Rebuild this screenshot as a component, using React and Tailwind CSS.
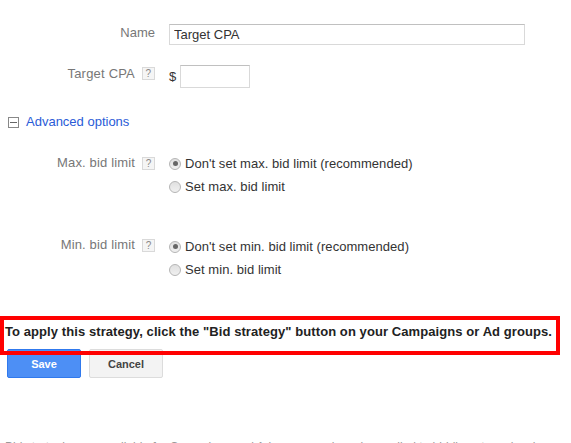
const HelpIcon = () => (
  <span className="flex h-[13px] w-[13px] items-center justify-center border border-[#d9d9d9] bg-[#f5f5f5] text-[10px] leading-none text-[#888]">
    ?
  </span>
);

const Radio = ({ checked, label }) => (
  <div className="flex h-[23px] items-center">
    <span className="flex h-[12px] w-[12px] items-center justify-center rounded-full border border-[#b5b5b5] bg-gradient-to-b from-[#e0e0e0] to-[#f0f0f0]">
      {checked && <span className="h-[5px] w-[5px] rounded-full bg-[#666]" />}
    </span>
    <span className="ml-[4px] tracking-[0.05px] text-[#333]">{label}</span>
  </div>
);

const BidLimit = ({ label, first, second, className, radiosClassName }) => (
  <div className={`flex ${className}`}>
    <div className="flex w-[155px] justify-end gap-[7px] pt-px tracking-[0.15px] text-[#777]">
      <span>{label}</span>
      <span className="mt-[2px]">
        <HelpIcon />
      </span>
    </div>
    <div className={`ml-[14px] flex flex-col ${radiosClassName}`}>
      <Radio checked label={first} />
      <Radio label={second} />
    </div>
  </div>
);

export default function App() {
  return (
    <div className="relative h-[443px] w-[571px] overflow-hidden bg-white font-['Liberation_Sans',Arial,sans-serif] text-[13px] leading-[16px]">
      <div className="pt-[24px]">
        {/* Name */}
        <div className="flex">
          <div className="w-[155px] pt-px text-right text-[#777]">Name</div>
          <input
            readOnly
            value="Target CPA"
            className="ml-[14px] h-[21px] w-[356px] border border-[#d9d9d9] border-t-[#c0c0c0] px-[4px] text-[#333] outline-none"
          />
        </div>

        {/* Target CPA */}
        <div className="mt-[20px] flex">
          <div className="flex w-[155px] justify-end gap-[7px] pt-px tracking-[0.2px] text-[#777]">
            <span>Target CPA</span>
            <span className="mt-[1px]">
              <HelpIcon />
            </span>
          </div>
          <div className="ml-[14px] flex items-center">
            <span className="w-[11px] text-[#333]">$</span>
            <input
              readOnly
              className="h-[23px] w-[70px] border border-[#d9d9d9] border-t-[#c0c0c0] outline-none"
            />
          </div>
        </div>

        {/* Advanced options */}
        <div className="mt-[26px] flex items-center pl-[8px]">
          <span className="flex h-[11px] w-[11px] items-center justify-center border border-[#888]">
            <span className="h-px w-[7px] bg-[#666]" />
          </span>
          <span className="ml-[7px] text-[#2a5bd7]">Advanced options</span>
        </div>

        <BidLimit
          className="mt-[24px]"
          radiosClassName="-mt-[2px]"
          label="Max. bid limit"
          first="Don't set max. bid limit (recommended)"
          second="Set max. bid limit"
        />
        <BidLimit
          className="mt-[38px]"
          radiosClassName="-mt-[1px]"
          label="Min. bid limit"
          first="Don't set min. bid limit (recommended)"
          second="Set min. bid limit"
        />

        {/* Strategy notice, its frame lies over the top of the buttons */}
        <div className="relative z-10 mt-[35px] flex h-[39px] w-[560px] items-center border-[4px] border-[#ff0000] pb-[7px] pl-[1px] text-[13px] font-bold tracking-[0.08px] whitespace-nowrap text-[#222]">
          To apply this strategy, click the "Bid strategy" button on your Campaigns or Ad groups.
        </div>

        {/* Actions */}
        <div className="-mt-[6px] flex gap-[8px] pl-[7px]">
          <button className="h-[29px] w-[74px] rounded-[2px] border border-[#3079ed] bg-[#4d8ff5] text-[11px] font-bold text-white">
            Save
          </button>
          <button className="h-[29px] w-[74px] rounded-[2px] border border-[#dcdcdc] bg-[#f3f3f3] text-[11px] font-bold text-[#444]">
            Cancel
          </button>
        </div>
      </div>

      {/* Footer text cut off by the bottom edge */}
      <div className="absolute top-[439px] left-[5px] text-[12px] whitespace-nowrap text-[#999]">
        Bid strategies are available for Campaigns and Ad groups and can be applied to bidding at any level.
      </div>
    </div>
  );
}
